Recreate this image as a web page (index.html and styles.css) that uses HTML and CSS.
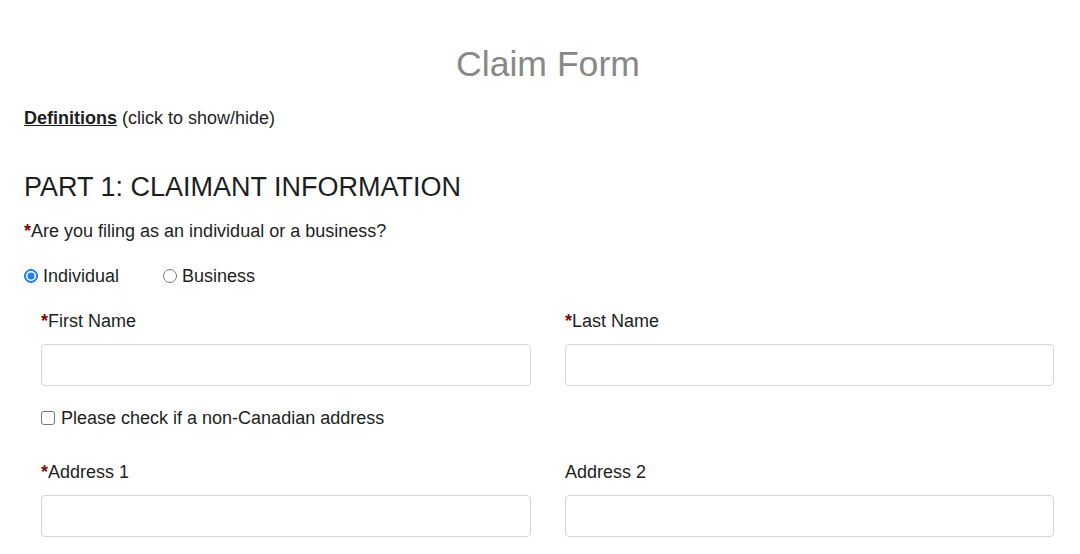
FILE: index.html
```html
<!DOCTYPE html>
<html lang="en">
<head>
<meta charset="utf-8">
<title>Claim Form</title>
<link rel="stylesheet" href="styles.css">
</head>
<body>
<main class="page">
  <h1 class="title">Claim Form</h1>
  <p class="defs"><a class="defs-link" href="#">Definitions</a> (click to show/hide)</p>
  <h2 class="part">PART 1: CLAIMANT INFORMATION</h2>
  <p class="question"><span class="req">*</span>Are you filing as an individual or a business?</p>
  <div class="radios">
    <label class="radio-opt"><input type="radio" name="type" class="radio" checked> Individual</label>
    <label class="radio-opt"><input type="radio" name="type" class="radio"> Business</label>
  </div>
  <div class="fields">
    <div class="field">
      <label class="field-label"><span class="req">*</span>First Name</label>
      <input class="text-input" type="text">
    </div>
    <div class="field">
      <label class="field-label"><span class="req">*</span>Last Name</label>
      <input class="text-input" type="text">
    </div>
  </div>
  <div class="check-row">
    <label class="check-opt"><input type="checkbox" class="check"> Please check if a non-Canadian address</label>
  </div>
  <div class="fields fields-addr">
    <div class="field">
      <label class="field-label"><span class="req">*</span>Address 1</label>
      <input class="text-input" type="text">
    </div>
    <div class="field">
      <label class="field-label">Address 2</label>
      <input class="text-input" type="text">
    </div>
  </div>
</main>
</body>
</html>
```

FILE: styles.css
```css
html, body {
  margin: 0;
  padding: 0;
  background: #ffffff;
}
body {
  font-family: "Liberation Sans", Arial, Helvetica, sans-serif;
  color: #1e1e1e;
  font-size: 18px;
  line-height: 20px;
}
.page {
  padding: 0 26px 0 24px;
}
.title {
  margin: 44px 0 0;
  font-size: 35.6px;
  line-height: 40px;
  font-weight: normal;
  color: #888888;
  text-align: center;
  padding-left: 18px;
}
.defs {
  margin: 24px 0 0;
}
.defs-link {
  color: #1e1e1e;
  font-weight: bold;
  text-decoration: underline;
}
.part {
  margin: 44px 0 0;
  font-size: 27px;
  line-height: 30px;
  font-weight: normal;
  color: #1e1e1e;
}
.question {
  margin: 19px 0 0;
}
.req {
  color: #7d0a0a;
  font-weight: bold;
}
.radios {
  margin-top: 25px;
  display: flex;
  gap: 44px;
  height: 20px;
  align-items: center;
}
.radio-opt, .check-opt {
  display: flex;
  align-items: center;
  gap: 5px;
}
.radio {
  appearance: none;
  -webkit-appearance: none;
  margin: 0;
  width: 14px;
  height: 14px;
  border-radius: 50%;
  border: 1px solid #777777;
  background: #ffffff;
  box-sizing: border-box;
}
.radio:checked {
  background: #1f7ff0;
  border: 1px solid #1a6fdc;
  box-shadow: inset 0 0 0 1px #1f7ff0, inset 0 0 0 2.5px #ffffff;
}
.fields {
  margin-top: 25px;
  padding-left: 17px;
  display: grid;
  grid-template-columns: 490px 489px;
  column-gap: 34px;
}
.fields-addr {
  margin-top: 34px;
}
.field {
  display: flex;
  flex-direction: column;
}
.field-label {
  line-height: 20px;
  margin-bottom: 13px;
}
.text-input {
  margin: 0;
  height: 42px;
  box-sizing: border-box;
  border: 1px solid #d3d7dc;
  border-radius: 4px;
  background: #ffffff;
  font: inherit;
  padding: 6px 12px;
}
.check-row {
  margin-top: 22px;
  padding-left: 17px;
  height: 20px;
  display: flex;
  align-items: center;
}
.check-opt {
  gap: 6px;
}
.check {
  appearance: none;
  -webkit-appearance: none;
  margin: 0;
  width: 14px;
  height: 14px;
  border: 1px solid #777777;
  border-radius: 3px;
  background: #ffffff;
  box-sizing: border-box;
}
```
